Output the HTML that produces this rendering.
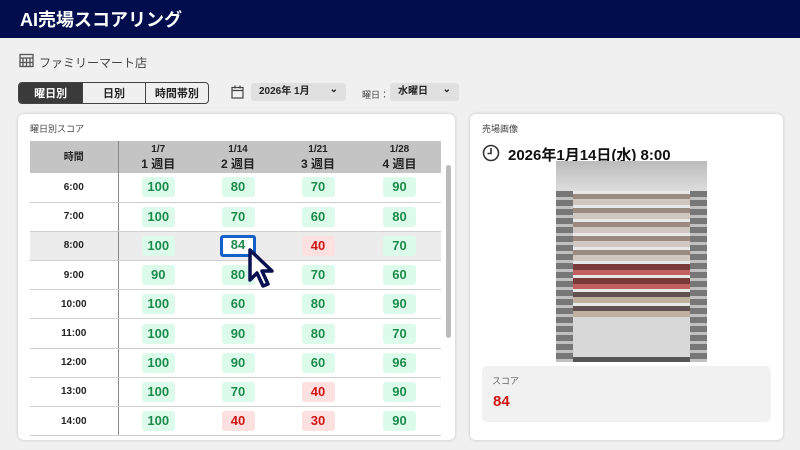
<!DOCTYPE html>
<html><head><meta charset="utf-8"><style>
*{box-sizing:border-box;margin:0;padding:0}
body{width:800px;height:450px;background:#f0f0f0;font-family:"Liberation Sans","Noto Sans CJK JP",sans-serif;position:relative;overflow:hidden;color:#222}
.hdr{position:absolute;left:0;top:0;width:800px;height:38px;background:#020d4e;color:#fff;font-weight:bold;font-size:18px;padding:6px 0 0 20px}
.abs{position:absolute}
.card{position:absolute;background:#fff;border-radius:6px;box-shadow:0 0 3px rgba(0,0,0,.2)}
.seg{position:absolute;left:18px;top:82px;width:191px;height:22px;border:1px solid #444;border-radius:4px;display:flex;font-size:11px;font-weight:bold;overflow:hidden}
.seg div{display:flex;align-items:center;justify-content:center;border-left:1px solid #444}
.sel{background:#e0e0e0;border-radius:3px;font-size:10px;font-weight:bold;padding:0 8px;height:18px;line-height:18px}
table{border-collapse:collapse;position:absolute;left:30px;top:141px;width:411px;font-size:11px;table-layout:fixed}
th{background:#c4c4c4;font-weight:bold;height:32px;font-size:10px;line-height:15px}
th.w,.w{font-size:12px}
td{height:29.2px;text-align:center;border-bottom:1px solid #cfcfcf;font-weight:bold;font-size:10px}
td:first-child,th:first-child{width:88px;border-right:1.5px solid #888}
.b{display:inline-block;width:33px;height:20px;line-height:20px;border-radius:3px;font-size:13px;font-weight:bold}
.g{background:#dcfbeb;color:#1d8a4c}.r{background:#fde0e0;color:#d01414}
tr.hl td{background:#ececec}
</style></head><body>
<div class="hdr">AI売場スコアリング</div>
<svg class="abs" style="left:19px;top:53px" width="15" height="15" viewBox="0 0 15 15" fill="none" stroke="#555" stroke-width="1.3"><rect x="1" y="1.5" width="13" height="12"/><path d="M1 5h13M4 5v8.5M7.5 5v8.5M11 5v8.5M1 9.5h13"/></svg>
<div class="abs" style="left:39px;top:54px;font-size:12px;color:#444">ファミリーマート店</div>
<div class="seg"><div style="width:64px;border:0;background:#3a3a3a;color:#fff">曜日別</div><div style="width:63px">日別</div><div style="width:64px">時間帯別</div></div>
<svg class="abs" style="left:231px;top:85px" width="13" height="14" viewBox="0 0 13 14" fill="none" stroke="#444" stroke-width="1.2"><rect x="1" y="2.5" width="11" height="10.5"/><path d="M1 5.5h11M4 0.5v3M9 0.5v3"/></svg>
<div class="abs sel" style="left:251px;top:83px;width:95px">2026年 1月<span style="position:absolute;right:8px;top:-2px">⌄</span></div>
<div class="abs" style="left:362px;top:88px;font-size:9px;color:#444">曜日：</div>
<div class="abs sel" style="left:390px;top:83px;width:69px">水曜日<span style="position:absolute;right:8px;top:-2px">⌄</span></div>

<div class="card" style="left:18px;top:114px;width:437px;height:326px"></div>
<div class="abs" style="left:30px;top:122px;font-size:9px;color:#444">曜日別スコア</div>
<table>
<colgroup><col style="width:88px"><col style="width:80px"><col style="width:80px"><col style="width:80px"><col style="width:83px"></colgroup>
<tr><th>時間</th><th>1/7<br><span class="w">1 週目</span></th><th>1/14<br><span class="w">2 週目</span></th><th>1/21<br><span class="w">3 週目</span></th><th>1/28<br><span class="w">4 週目</span></th></tr>
<tr><td>6:00</td><td><span class="b g">100</span></td><td><span class="b g">80</span></td><td><span class="b g">70</span></td><td><span class="b g">90</span></td></tr>
<tr><td>7:00</td><td><span class="b g">100</span></td><td><span class="b g">70</span></td><td><span class="b g">60</span></td><td><span class="b g">80</span></td></tr>
<tr class="hl"><td>8:00</td><td><span class="b g">100</span></td><td><span class="b g" style="background:#fff;border:3px solid #1560c8;line-height:14px;width:36px;height:22px">84</span></td><td><span class="b r">40</span></td><td><span class="b g">70</span></td></tr>
<tr><td>9:00</td><td><span class="b g">90</span></td><td><span class="b g">80</span></td><td><span class="b g">70</span></td><td><span class="b g">60</span></td></tr>
<tr><td>10:00</td><td><span class="b g">100</span></td><td><span class="b g">60</span></td><td><span class="b g">80</span></td><td><span class="b g">90</span></td></tr>
<tr><td>11:00</td><td><span class="b g">100</span></td><td><span class="b g">90</span></td><td><span class="b g">80</span></td><td><span class="b g">70</span></td></tr>
<tr><td>12:00</td><td><span class="b g">100</span></td><td><span class="b g">90</span></td><td><span class="b g">60</span></td><td><span class="b g">96</span></td></tr>
<tr><td>13:00</td><td><span class="b g">100</span></td><td><span class="b g">70</span></td><td><span class="b r">40</span></td><td><span class="b g">90</span></td></tr>
<tr><td>14:00</td><td><span class="b g">100</span></td><td><span class="b r">40</span></td><td><span class="b r">30</span></td><td><span class="b g">90</span></td></tr>
</table>
<div class="abs" style="left:446px;top:165px;width:5px;height:173px;background:#bbb;border-radius:3px"></div>
<svg class="abs" style="left:245px;top:247px" width="34" height="42" viewBox="0 0 34 42"><path d="M5 3L5 33L12 26L18 39L23 37L17 24L27 24Z" fill="#fff" stroke="#0a1150" stroke-width="3.5" stroke-linejoin="round"/></svg>

<div class="card" style="left:470px;top:114px;width:313px;height:326px"></div>
<div class="abs" style="left:482px;top:122px;font-size:9px;color:#444">売場画像</div>
<svg class="abs" style="left:482px;top:144px" width="18" height="18" viewBox="0 0 18 18" fill="none" stroke="#333" stroke-width="1.6"><circle cx="9" cy="9" r="7.5"/><path d="M9 4v5.5H5.5"/></svg>
<div class="abs" style="left:508px;top:144px;font-size:15px;font-weight:bold;color:#111">2026年1月14日(水) 8:00</div>
<div class="abs" style="left:556px;top:161px;width:151px;height:201px;background:#555;overflow:hidden">
<div class="abs" style="left:0;top:0;width:151px;height:30px;background:linear-gradient(#bbb,#ddd)"></div>
<div class="abs" style="left:17px;top:30px;width:117px;height:70px;background:repeating-linear-gradient(#e8e8e8 0 3px,#9a8a80 3px 8px,#d0c8c0 8px 14px)"></div>
<div class="abs" style="left:17px;top:100px;width:117px;height:28px;background:repeating-linear-gradient(#e8e8e8 0 3px,#7a3a3a 3px 9px,#c06060 9px 14px)"></div>
<div class="abs" style="left:17px;top:128px;width:117px;height:28px;background:repeating-linear-gradient(#e8e8e8 0 3px,#605050 3px 8px,#c0b0a0 8px 14px)"></div>
<div class="abs" style="left:17px;top:156px;width:117px;height:40px;background:#d8d8d8"></div>
<div class="abs" style="left:0;top:30px;width:17px;height:171px;background:repeating-linear-gradient(#777 0 6px,#c0c0c0 6px 9px)"></div>
<div class="abs" style="left:134px;top:30px;width:17px;height:171px;background:repeating-linear-gradient(#777 0 6px,#c0c0c0 6px 9px)"></div>
</div>
<div class="abs" style="left:482px;top:366px;width:289px;height:56px;background:#f1f1f1;border-radius:5px"></div>
<div class="abs" style="left:492px;top:374px;font-size:9px;color:#666">スコア</div>
<div class="abs" style="left:493px;top:393px;font-size:15px;font-weight:bold;color:#d01414">84</div>
</body></html>
